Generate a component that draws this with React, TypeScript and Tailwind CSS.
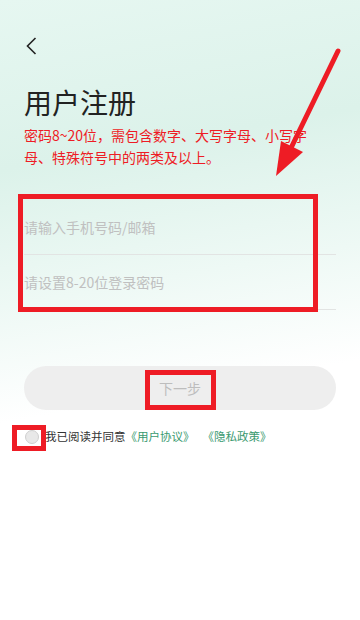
const fields = ['请输入手机号码/邮箱', '请设置8-20位登录密码']

const App = () => (
  <div
    className="relative h-[620px] w-[360px] overflow-hidden bg-[linear-gradient(170deg,#e6f7f1_0%,#dcf2ea_25%,#eef9f5_45%,#ffffff_62%)] px-6 text-[#222]"
    style={{ fontFamily: '"Noto Sans CJK SC", "Noto Sans", sans-serif' }}
  >
    <div className="pt-[37px]">
      <svg width="14" height="18" viewBox="0 0 14 18" className="ml-[1px]">
        <path d="M10.5 1 L2.5 9 L10.5 17" fill="none" stroke="#222" strokeWidth="1.6" />
      </svg>
    </div>

    <h1 className="mt-[27px] text-[28px] leading-[40px] font-normal">用户注册</h1>
    <p className="mt-[2px] w-[292px] text-[14px] leading-[22px] text-[#ee1c25]">
      密码8~20位，需包含数字、大写字母、小写字母、特殊符号中的两类及以上。
    </p>

    <div className="mt-[32px]">
      {fields.map((f) => (
        <div key={f} className="flex h-[55px] items-center border-b border-[#e2e4e3] text-[14px] text-[#c0c0c0]">
          {f}
        </div>
      ))}
    </div>

    <button className="mt-[56px] flex h-[44px] w-full items-center justify-center rounded-full bg-[#eeeeee] text-[14px] text-[#bdbdbd]">
      下一步
    </button>

    <div className="mt-[17px] flex h-[20px] items-center text-[11.5px]">
      <span className="mr-[6px] ml-[1px] h-[14px] w-[14px] rounded-full border border-[#cfcfcf] bg-[#e8e8e8]" />
      <span className="text-[#333]">我已阅读并同意</span>
      <span className="text-[#3a9a70]">《用户协议》</span>
      <span className="ml-[8px] text-[#3a9a70]">《隐私政策》</span>
    </div>

    {/* annotations */}
    <div className="absolute top-[194px] left-[18px] h-[118px] w-[300px] border-[5px] border-[#ee1c25]" />
    <div className="absolute top-[370px] left-[145px] h-[40px] w-[71px] border-[5px] border-[#ee1c25]" />
    <div className="absolute top-[425px] left-[12px] h-[26px] w-[34px] border-[5px] border-[#ee1c25]" />
    <svg className="absolute top-0 left-0" width="360" height="620" viewBox="0 0 360 620">
      <line x1="338" y1="51" x2="291" y2="148" stroke="#ee1c25" strokeWidth="5" strokeLinecap="round" />
      <polygon points="276,176 281,141 303,152" fill="#ee1c25" />
    </svg>
  </div>
)

export default App
